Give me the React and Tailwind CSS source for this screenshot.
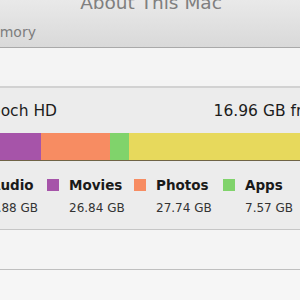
import React from 'react';

const segments = [
    { color: 'bg-[#a654a9]', width: 'w-[41px]' },
    { color: 'bg-[#f78c62]', width: 'w-[69px]' },
    { color: 'bg-[#80d36b]', width: 'w-[19px]' },
    { color: 'bg-[#e7d95c]', width: 'flex-1' },
];

const legend = [
    { name: 'Audio', size: '7.88 GB', swatch: 'bg-[#7fb3e6]', width: 'w-[79px]' },
    { name: 'Movies', size: '26.84 GB', swatch: 'bg-[#a654a9]', width: 'w-[87px]' },
    { name: 'Photos', size: '27.74 GB', swatch: 'bg-[#f78c62]', width: 'w-[89px]' },
    { name: 'Apps', size: '7.57 GB', swatch: 'bg-[#80d36b]', width: 'w-[90px]' },
];

export default function App() {
    return (
        <div className="w-[300px] h-[300px] overflow-hidden bg-[#f6f6f6] font-['DejaVu_Sans',sans-serif]">
            {/* Title bar + tabs */}
            <div className="h-[47px] flex flex-col bg-gradient-to-b from-[#e9e9e9] to-[#d9d9d9] border-b border-[#a9a9a9] box-content">
                <div className="mt-[-6px] text-center text-[18.5px] leading-none text-[#7f7f7f] whitespace-nowrap pl-[2px]">
                    About This Mac
                </div>
                <div className="mt-[12px] ml-[-21px] text-[14px] leading-none text-[#7d7d7d] whitespace-nowrap">
                    Memory
                </div>
            </div>

            {/* Tab strip */}
            <div className="h-[38px] bg-[#f4f4f4] border-b-2 border-[#d2d2d2] box-content" />

            {/* Storage panel */}
            <div className="h-[141px] flex flex-col bg-[#ececec] border-b border-[#c6c6c6] box-content">
                <div className="flex justify-between pt-[16px] text-[15.5px] leading-none text-[#1c1c1c] whitespace-nowrap">
                    <span className="ml-[-19px]">Epoch HD</span>
                    <span className="mr-[-103px]">16.96 GB free of 120 GB</span>
                </div>

                <div className="mt-[13px] h-[28px] flex border-b border-[#6f6446]">
                    {segments.map((s, i) => (
                        <div key={i} className={`${s.color} ${s.width} h-full`} />
                    ))}
                </div>

                <div className="flex mt-[18px] ml-[-32px] whitespace-nowrap">
                    {legend.map((item) => (
                        <div key={item.name} className={`${item.width} shrink-0`}>
                            <div className="flex items-center gap-[10px]">
                                <div className={`w-[12px] h-[12px] ${item.swatch}`} />
                                <span className="text-[13.5px] leading-none font-bold text-[#1a1a1a]">{item.name}</span>
                            </div>
                            <div className="pl-[22px] mt-[10px] text-[12px] leading-none text-[#333]">
                                {item.size}
                            </div>
                        </div>
                    ))}
                </div>
            </div>

            {/* Lower strip */}
            <div className="h-[39px] bg-[#f4f4f4] border-b border-[#bfbfbf] box-content" />
        </div>
    );
}
